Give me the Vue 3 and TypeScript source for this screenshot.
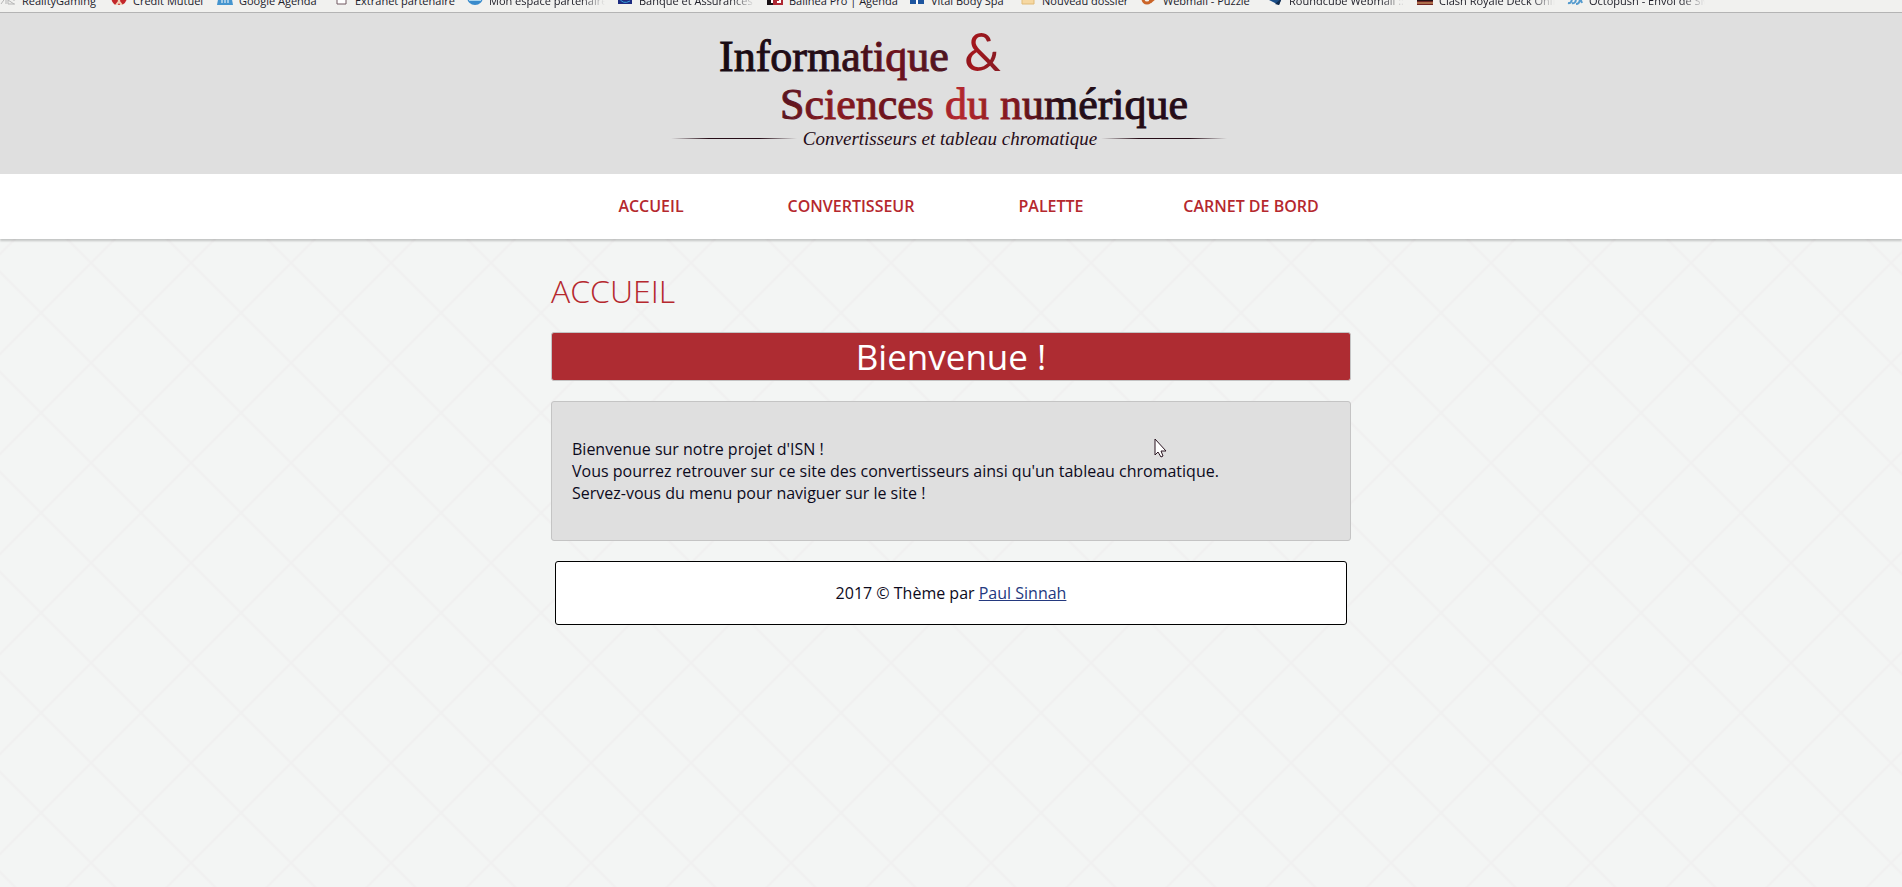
<script setup lang="ts">
interface Bookmark {
  icon: string
  label: string
  width: number
  long?: boolean
}

const bookmarks: Bookmark[] = [
  { icon: 'reality', label: 'RealityGaming', width: 111 },
  { icon: 'credit', label: 'Crédit Mutuel', width: 106 },
  { icon: 'agenda', label: 'Google Agenda', width: 116 },
  { icon: 'page', label: 'Extranet partenaire', width: 134 },
  { icon: 'globe', label: 'Mon espace partenaire', width: 150, long: true },
  { icon: 'bank', label: 'Banque et Assurances', width: 150, long: true },
  { icon: 'balinea', label: 'Balinea Pro | Agenda', width: 142 },
  { icon: 'vital', label: 'Vital Body Spa', width: 111 },
  { icon: 'folder', label: 'Nouveau dossier', width: 121 },
  { icon: 'webmail', label: 'Webmail - Puzzle', width: 126 },
  { icon: 'cube', label: 'Roundcube Webmail ::', width: 150, long: true },
  { icon: 'clash', label: 'Clash Royale Deck Online', width: 150, long: true },
  { icon: 'octopush', label: 'Octopush - Envoi de SMS', width: 150, long: true },
]

const menu: string[] = ['Accueil', 'Convertisseur', 'Palette', 'Carnet de bord']
</script>

<template>
  <div class="page">
    <div class="bookmarks">
      <a
        v-for="b in bookmarks"
        :key="b.label"
        class="bookmark"
        :class="{ long: b.long }"
        href="#"
        :style="{ width: b.width + 'px' }"
      >
        <svg class="bookmark-icon" viewBox="0 0 16 16" aria-hidden="true">
          <g v-if="b.icon === 'reality'" fill="none" stroke="#b5b5b5">
            <path d="M1 15L6 8V15M8 7V15M8 11L14 15M8 15H15M14 7V12" />
          </g>
          <g v-else-if="b.icon === 'credit'">
            <path d="M0 8Q1 15 5 16H11Q16 14 16 7Z" fill="#c3272b" />
            <path d="M4 16L7 12L6 8H10L9 12L12 16H9L8 14L7 16Z" fill="#f1d2b8" />
          </g>
          <g v-else-if="b.icon === 'agenda'">
            <path d="M2 5H14L16 16H0Z" fill="#4595cf" />
            <path d="M5 8V14M8 8V14M11 8V14" stroke="#fff" />
          </g>
          <path v-else-if="b.icon === 'page'" d="M4 2H13V15H4Z" fill="#fff" stroke="#705860" />
          <g v-else-if="b.icon === 'globe'">
            <circle cx="8" cy="8" r="8" fill="#398bcc" />
            <path d="M2 11H14" stroke="#a7d4ef" stroke-width="2" />
          </g>
          <g v-else-if="b.icon === 'bank'">
            <path d="M1 1H15V15H1Z" fill="#1d2c82" />
            <path d="M2 9Q6 16 13 12" fill="none" stroke="#35a0dc" stroke-width="1" />
          </g>
          <g v-else-if="b.icon === 'balinea'">
            <path d="M0 0H6V16H0Z" fill="#171014" />
            <path d="M6 0H16V16H6Z" fill="#ae2833" />
            <path d="M5 10V14M10 13H13V10" fill="none" stroke="#fff" stroke-width="2" />
          </g>
          <g v-else-if="b.icon === 'vital'">
            <path d="M1 1H15V15H1Z" fill="#1d559f" />
            <path d="M8 15V7" stroke="#fff" stroke-width="2" />
          </g>
          <path v-else-if="b.icon === 'folder'" d="M2 3H14V15H2Z" fill="#f6d8a2" stroke="#e1bb78" />
          <g v-else-if="b.icon === 'webmail'" fill="none" stroke="#ca6427" stroke-width="3">
            <circle cx="6" cy="10" r="4" />
            <path d="M9 13L15 8" />
          </g>
          <g v-else-if="b.icon === 'cube'">
            <path d="M1 8L8 4L15 8L12 16L2 11Z" fill="#1b4e88" />
            <path d="M8 15L12 16L15 9Z" fill="#102b4d" />
          </g>
          <g v-else-if="b.icon === 'clash'">
            <path d="M0 0H16V16H0Z" fill="#221116" />
            <path d="M0 13H16M0 15H16" stroke="#be3b30" />
            <path d="M0 14H16" stroke="#e8b875" />
            <path d="M4 10H7M9 10H12" stroke="#fff" stroke-width="2" />
          </g>
          <g v-else fill="none" stroke="#559bce" stroke-width="2">
            <path d="M1 14Q5 15 5 8M5 14Q9 15 9 9M9 15Q13 15 13 9L15 14" />
          </g>
        </svg>
        <span class="bookmark-label">{{ b.label }}</span>
      </a>
    </div>

    <header class="banner">
      <svg class="logo" viewBox="0 0 580 150" role="img" aria-label="Informatique &amp; Sciences du numérique">
        <defs>
          <linearGradient id="ink-top" gradientUnits="userSpaceOnUse" x1="60" y1="0" x2="340" y2="0">
            <stop offset="0" stop-color="#180a12" />
            <stop offset="0.43" stop-color="#280d18" />
            <stop offset="0.62" stop-color="#70121d" />
            <stop offset="0.8" stop-color="#4d1420" />
            <stop offset="0.9" stop-color="#a4161c" />
            <stop offset="1" stop-color="#861c24" />
          </linearGradient>
          <linearGradient id="ink-bottom" gradientUnits="userSpaceOnUse" x1="120" y1="0" x2="524" y2="0">
            <stop offset="0" stop-color="#581420" />
            <stop offset="0.13" stop-color="#8c1b20" />
            <stop offset="0.28" stop-color="#68121d" />
            <stop offset="0.44" stop-color="#b5282e" />
            <stop offset="0.58" stop-color="#80161e" />
            <stop offset="0.7" stop-color="#230d18" />
            <stop offset="1" stop-color="#260c17" />
          </linearGradient>
          <linearGradient id="rule">
            <stop offset="0" stop-color="#260c17" stop-opacity="0" />
            <stop offset="0.3" stop-color="#260c17" />
            <stop offset="0.7" stop-color="#260c17" />
            <stop offset="1" stop-color="#260c17" stop-opacity="0" />
          </linearGradient>
        </defs>
        <g class="logo-title">
          <text y="58" fill="url(#ink-top)" stroke="url(#ink-top)">
            <tspan x="58">Informatique</tspan>
            <tspan x="303" class="logo-amp">&amp;</tspan>
          </text>
          <text x="119" y="106" fill="url(#ink-bottom)" stroke="url(#ink-bottom)">Sciences du numérique</text>
        </g>
        <text class="logo-sub" x="289" y="132" text-anchor="middle">Convertisseurs et tableau chromatique</text>
        <rect x="10" y="125" width="126" height="1" fill="url(#rule)" />
        <rect x="440" y="125" width="126" height="1" fill="url(#rule)" />
      </svg>
    </header>

    <nav class="menu">
      <ul>
        <li v-for="item in menu" :key="item"><a href="#">{{ item }}</a></li>
      </ul>
    </nav>

    <main class="content">
      <h1>Accueil</h1>
      <h2>Bienvenue !</h2>
      <section class="card">
        <p>
          Bienvenue sur notre projet d'ISN !<br />
          Vous pourrez retrouver sur ce site des convertisseurs ainsi qu'un tableau chromatique.<br />
          Servez-vous du menu pour naviguer sur le site !
        </p>
        <svg class="cursor" viewBox="0 0 13 20" aria-hidden="true">
          <path d="M1 1V17L4 14L7 19L9 18L7 13H12Z" fill="#fff" stroke="#2a1420" />
        </svg>
      </section>
      <footer>2017 © Thème par <a href="#">Paul Sinnah</a></footer>
    </main>
  </div>
</template>

<style>
body {
  margin: 0;
  background-color: #f3f5f4;
}
</style>

<style scoped>
.page {
  min-height: 100vh;
  background-color: #f3f5f4;
  background-image:
    linear-gradient(45deg, transparent calc(50% - 2px), #f0f0f0 50%, transparent calc(50% + 2px)),
    linear-gradient(-45deg, transparent calc(50% - 2px), #f0f0f0 50%, transparent calc(50% + 2px));
  background-size: 100px 100px;
  background-position: 91px 63px;
  color: #0c0a1c;
  font: 400 16px/22px "Open Sans", "Noto Sans", sans-serif;
}

.bookmarks {
  box-sizing: border-box;
  display: flex;
  align-items: flex-end;
  height: 13px;
  padding-bottom: 3px;
  overflow: hidden;
  background: #f1f1ef;
  border-bottom: 1px solid #b4b4b4;
}

.bookmark {
  box-sizing: border-box;
  display: flex;
  flex: none;
  align-items: flex-end;
  gap: 6px;
  color: #20202a;
  font: 400 11px/16px "Open Sans", "Noto Sans", sans-serif;
  text-decoration: none;
}

.bookmark-icon {
  flex: none;
  width: 16px;
  height: 16px;
  margin-bottom: 4px;
}

.bookmark-label {
  white-space: nowrap;
}

.long {
  padding-right: 12px;
}

.long .bookmark-label {
  flex: 1;
  overflow: hidden;
  mask-image: linear-gradient(to left, transparent, #000 24px);
}

.banner {
  display: flex;
  justify-content: center;
  padding-bottom: 11px;
  background: #dfdfdf;
}

.logo {
  display: block;
  width: 580px;
  height: 150px;
}

.logo-title {
  font: 400 44px "Liberation Serif", serif;
  stroke-width: 1px;
}

.logo-amp {
  font: 400 52px Lato, sans-serif;
  stroke-width: 0;
}

.logo-sub {
  font: italic 400 19px "Liberation Serif", serif;
  fill: #260c17;
}

.menu {
  background: #fff;
  box-shadow: 0 2px 2px rgba(0, 0, 0, 0.2);
}

.menu ul {
  display: grid;
  grid-template-columns: repeat(4, 1fr);
  max-width: 800px;
  margin: 0 auto;
  padding: 0;
  list-style: none;
}

.menu a {
  display: block;
  padding: 21px 0 22px;
  color: #b5282e;
  font-weight: 600;
  text-align: center;
  text-decoration: none;
  text-transform: uppercase;
}

.content {
  max-width: 800px;
  margin: 0 auto;
  padding-top: 30px;
}

h1 {
  margin: 0 0 19px;
  color: #b5282e;
  font-size: 32px;
  font-weight: 300;
  line-height: 44px;
  text-transform: uppercase;
}

h2 {
  margin: 0 0 20px;
  border: 1px solid #c4c4c4;
  border-radius: 3px;
  background: #ae2c32;
  color: #fff;
  font-size: 35px;
  font-weight: 400;
  line-height: 47px;
  text-align: center;
}

.card {
  position: relative;
  margin-bottom: 20px;
  padding: 36px 20px;
  border: 1px solid #c4c4c4;
  border-radius: 3px;
  background: #dfdfdf;
}

.card p {
  margin: 0;
}

.cursor {
  position: absolute;
  top: 36px;
  left: 602px;
  width: 13px;
  height: 20px;
}

footer {
  margin: 0 4px;
  padding: 20px;
  border: 1px solid #000;
  border-radius: 3px;
  background: #fff;
  text-align: center;
}

footer a {
  color: #24397f;
}
</style>
